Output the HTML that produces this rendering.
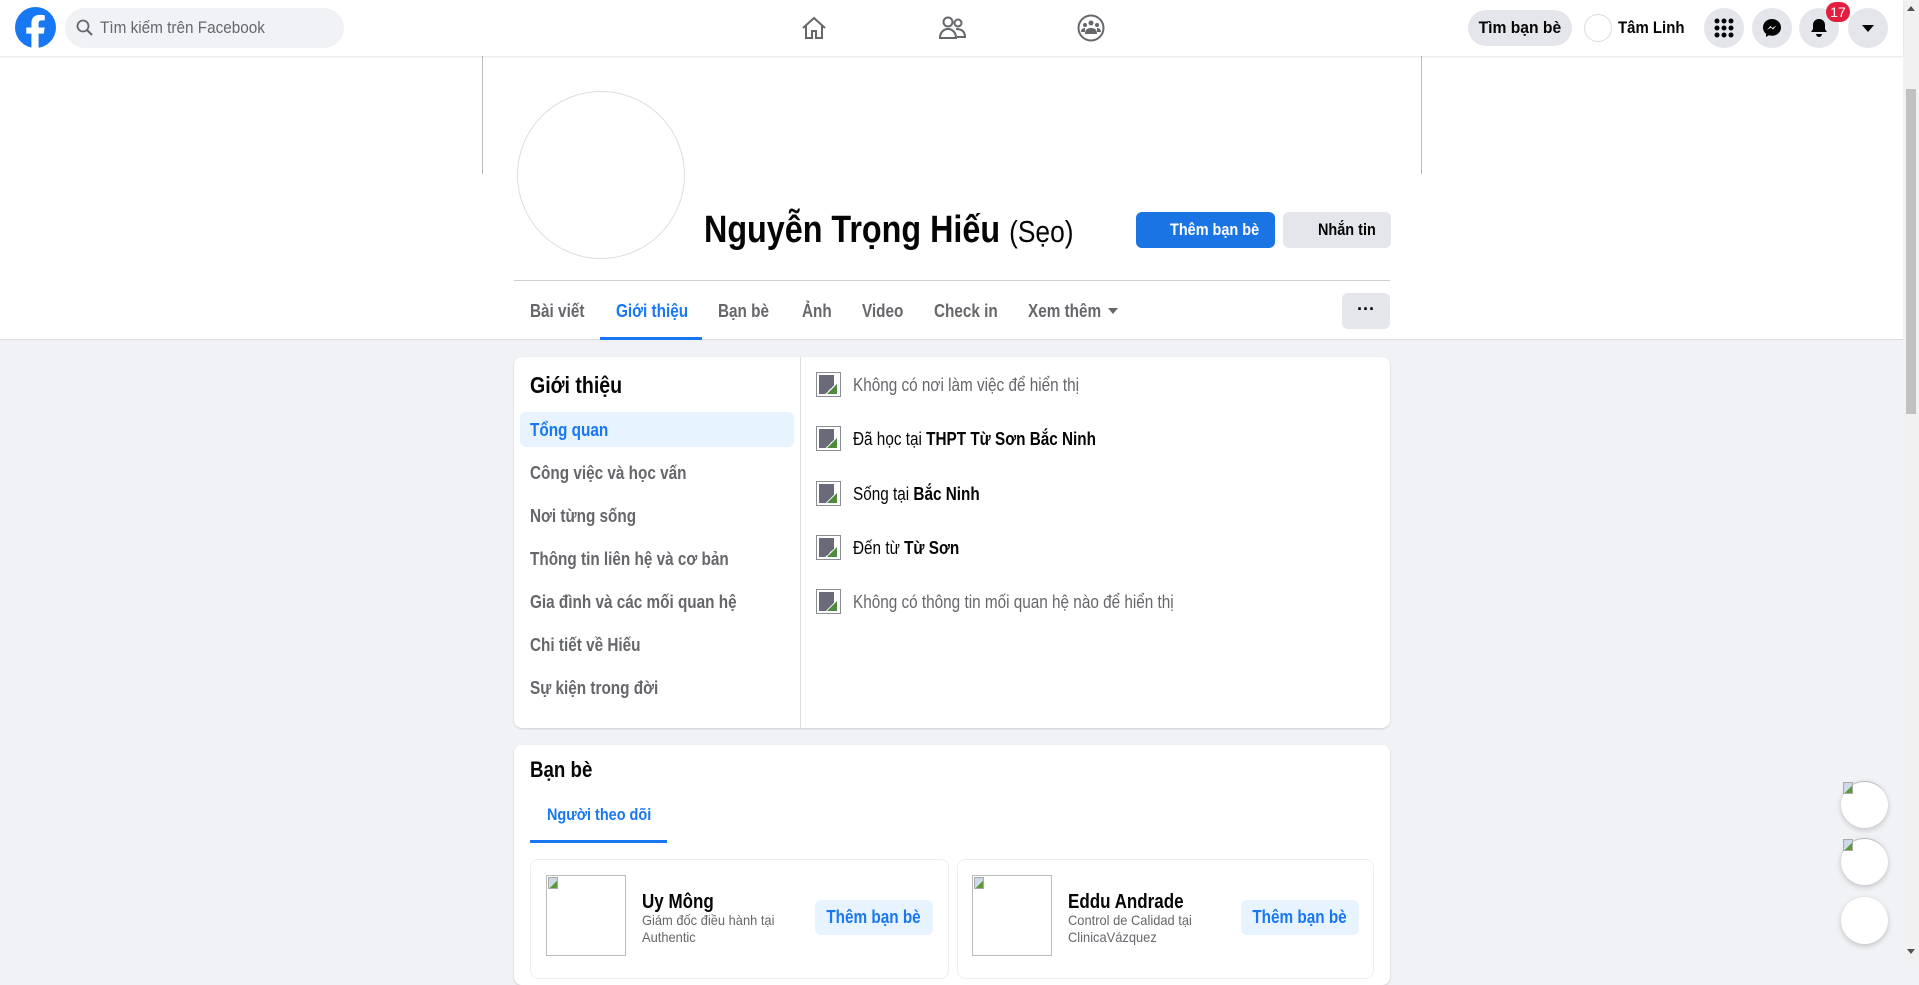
<!DOCTYPE html>
<html><head><meta charset="utf-8">
<style>
*{box-sizing:border-box;margin:0;padding:0}
body{width:1919px;height:961px;overflow:hidden;background:#f0f2f5;font-family:"Liberation Sans",sans-serif;position:relative;color:#050505}
.a{position:absolute;white-space:nowrap}
.t{display:inline-block;transform:scaleX(.85);transform-origin:0 50%}
.tc{display:inline-block;transform:scaleX(.85);transform-origin:50% 50%}
.top{left:0;top:0;width:1903px;height:56px;background:#fff;box-shadow:0 1px 2px rgba(0,0,0,.1);z-index:5}
.hdr{left:0;top:56px;width:1903px;height:284px;background:#fff;border-bottom:1px solid #ddd}
.circ{width:40px;height:40px;border-radius:50%;background:#e4e6eb;top:8px}
.tab{top:301px;font-size:18px;font-weight:bold;color:#65676b}
.card{background:#fff;border-radius:8px;box-shadow:0 1px 2px rgba(0,0,0,.15)}
.mi{left:530px;font-size:18px;font-weight:bold;color:#65676b}
.ri{left:816px;width:25px;height:25px;border:1px solid #8a8d91;background:#fff;overflow:hidden}
.ri:before{content:"";position:absolute;left:2px;top:2px;width:15px;height:19px;background:linear-gradient(135deg,#6a6a7a 75%,transparent 75%)}
.ri:after{content:"";position:absolute;right:3px;bottom:2px;width:0;height:0;border-left:10px solid transparent;border-bottom:10px solid #4d8a3c}
.rt{left:853px;top:0;font-size:18px;color:#050505}
.btnl{background:#e7f3ff;color:#1877f2;font-weight:bold;font-size:18px;border-radius:6px;text-align:center;line-height:35px}
.bi{width:10px;height:12px;border:1px solid #aaa;background:linear-gradient(135deg,#cfd8e6 60%,#5a9a3c 60%)}
</style></head><body>
<div class="a top">
  <svg class="a" style="left:15px;top:7px" width="41" height="41" viewBox="0 0 40 40"><circle cx="20" cy="20" r="20" fill="#1877f2"/><path d="M23 40V26h5l1-6h-6v-4c0-2 1-3 3-3h3V8c-1 0-3-.3-5-.3-5 0-8 3-8 8V20h-5v6h5v14z" fill="#fff"/></svg>
  <div class="a" style="left:65px;top:8px;width:279px;height:40px;border-radius:20px;background:#f0f2f5"></div>
  <svg class="a" style="left:76px;top:19px" width="18" height="18" viewBox="0 0 18 18"><circle cx="7" cy="7" r="5.5" fill="none" stroke="#65676b" stroke-width="1.8"/><path d="M11 11l5 5" stroke="#65676b" stroke-width="2"/></svg>
  <div class="a" style="left:100px;top:18px;font-size:17px;color:#65676b"><span class="t" style="transform:scaleX(.9)">Tìm kiếm trên Facebook</span></div>
  <svg class="a" style="left:800px;top:14px" width="28" height="28" viewBox="0 0 28 28"><path d="M3 14L14 4l11 10M6 12v12h6v-7h4v7h6V12" fill="none" stroke="#65676b" stroke-width="2"/></svg>
  <svg class="a" style="left:938px;top:14px" width="30" height="28" viewBox="0 0 30 28"><circle cx="10" cy="8" r="4.5" fill="none" stroke="#65676b" stroke-width="2"/><circle cx="20" cy="9" r="3.5" fill="none" stroke="#65676b" stroke-width="2"/><path d="M2 24c0-6 4-9 8-9s8 3 8 9zM18 15c5 0 9 2 9 8h-8" fill="none" stroke="#65676b" stroke-width="2"/></svg>
  <svg class="a" style="left:1076px;top:13px" width="30" height="30" viewBox="0 0 30 30"><circle cx="15" cy="15" r="12.5" fill="none" stroke="#65676b" stroke-width="2"/><circle cx="15" cy="10" r="2.5" fill="#65676b"/><circle cx="9" cy="12" r="2" fill="#65676b"/><circle cx="21" cy="12" r="2" fill="#65676b"/><path d="M9 21c0-4 2-6 6-6s6 2 6 6zM5 19c0-3 2-4 4-4v4zM25 19c0-3-2-4-4-4v4z" fill="#65676b"/></svg>
  <div class="a" style="left:1468px;top:10px;width:104px;height:36px;border-radius:18px;background:#e4e6eb;font-size:17px;font-weight:bold;text-align:center;line-height:36px"><span class="tc" style="transform:scaleX(.92)">Tìm bạn bè</span></div>
  <div class="a" style="left:1584px;top:14px;width:28px;height:28px;border-radius:50%;border:1px solid #ddd;background:#fff"></div>
  <div class="a" style="left:1618px;top:18px;font-size:17px;font-weight:bold"><span class="t" style="transform:scaleX(.88)">Tâm Linh</span></div>
  <div class="a circ" style="left:1704px"></div>
  <svg class="a" style="left:1714px;top:18px" width="20" height="20" viewBox="0 0 20 20" fill="#050505"><circle cx="3" cy="3" r="2.5"/><circle cx="10" cy="3" r="2.5"/><circle cx="17" cy="3" r="2.5"/><circle cx="3" cy="10" r="2.5"/><circle cx="10" cy="10" r="2.5"/><circle cx="17" cy="10" r="2.5"/><circle cx="3" cy="17" r="2.5"/><circle cx="10" cy="17" r="2.5"/><circle cx="17" cy="17" r="2.5"/></svg>
  <div class="a circ" style="left:1752px"></div>
  <svg class="a" style="left:1762px;top:18px" width="20" height="20" viewBox="0 0 20 20"><path d="M10 1C5 1 1 4.5 1 9.5c0 2.5 1 4.7 3 6.3V19l3-1.7c1 .3 2 .4 3 .4 5 0 9-3.6 9-8.2S15 1 10 1z" fill="#050505"/><path d="M5 12l3.5-4 2 2 4-2.5-3.5 4-2-2z" fill="#fff"/></svg>
  <div class="a circ" style="left:1799px"></div>
  <svg class="a" style="left:1809px;top:17px" width="20" height="22" viewBox="0 0 20 22"><path d="M10 2c-4 0-6 3-6 6v4l-2 3h16l-2-3V8c0-3-2-6-6-6zM7 17a3 3 0 006 0z" fill="#050505"/></svg>
  <div class="a" style="left:1826px;top:2px;min-width:24px;height:20px;border-radius:10px;background:#e41e3f;color:#fff;font-size:14px;text-align:center;line-height:20px;padding:0 3px">17</div>
  <div class="a circ" style="left:1848px"></div>
  <div class="a" style="left:1862px;top:25px;border-left:6px solid transparent;border-right:6px solid transparent;border-top:7px solid #050505"></div>
</div>
<div class="a" style="left:1903px;top:0;width:16px;height:961px;background:#f1f1f1"></div>
<div class="a" style="left:1906px;top:89px;width:10px;height:325px;background:#c1c1c1"></div>
<div class="a" style="left:1907px;top:6px;border-left:4px solid transparent;border-right:4px solid transparent;border-bottom:5px solid #505050"></div>
<div class="a" style="left:1907px;top:949px;border-left:4px solid transparent;border-right:4px solid transparent;border-top:5px solid #505050"></div>

<div class="a hdr"></div>
<div class="a" style="left:482px;top:56px;width:1px;height:118px;background:#bbb"></div>
<div class="a" style="left:1421px;top:56px;width:1px;height:118px;background:#bbb"></div>
<div class="a" style="left:517px;top:91px;width:168px;height:168px;border-radius:50%;border:1px solid #ddd;background:#fff"></div>
<div class="a" style="left:704px;top:209px;font-size:38px;font-weight:bold"><span class="t">Nguyễn Trọng Hiếu <span style="font-weight:normal;font-size:31px">(Sẹo)</span></span></div>
<div class="a" style="left:1136px;top:212px;width:139px;height:36px;border-radius:6px;background:#1b74e4;color:#fff;font-size:17px;font-weight:bold;line-height:36px;padding-left:34px"><span class="t">Thêm bạn bè</span></div>
<div class="a" style="left:1283px;top:212px;width:108px;height:36px;border-radius:6px;background:#e4e6eb;font-size:17px;font-weight:bold;line-height:36px;padding-left:35px"><span class="t">Nhắn tin</span></div>
<div class="a" style="left:514px;top:280px;width:876px;height:1px;background:#ced0d4"></div>
<div class="a tab" style="left:530px"><span class="t">Bài viết</span></div>
<div class="a tab" style="left:616px;color:#1877f2"><span class="t">Giới thiệu</span></div>
<div class="a" style="left:600px;top:337px;width:102px;height:3px;background:#1877f2"></div>
<div class="a tab" style="left:718px"><span class="t">Bạn bè</span></div>
<div class="a tab" style="left:802px"><span class="t">Ảnh</span></div>
<div class="a tab" style="left:862px"><span class="t">Video</span></div>
<div class="a tab" style="left:934px"><span class="t">Check in</span></div>
<div class="a tab" style="left:1028px"><span class="t">Xem thêm</span></div>
<div class="a" style="left:1108px;top:308px;border-left:5px solid transparent;border-right:5px solid transparent;border-top:6px solid #65676b"></div>
<div class="a" style="left:1342px;top:293px;width:48px;height:36px;border-radius:6px;background:#e4e6eb;font-size:18px;font-weight:bold;text-align:center;line-height:32px">···</div>

<div class="a card" style="left:514px;top:357px;width:876px;height:371px"></div>
<div class="a" style="left:800px;top:357px;width:1px;height:371px;background:#ddd"></div>
<div class="a" style="left:530px;top:372px;font-size:23px;font-weight:bold"><span class="t">Giới thiệu</span></div>
<div class="a" style="left:520px;top:412px;width:274px;height:35px;border-radius:6px;background:#e7f3ff"></div>
<div class="a mi" style="left:530px;top:420px;color:#1877f2"><span class="t">Tổng quan</span></div>
<div class="a mi" style="top:463px"><span class="t">Công việc và học vấn</span></div>
<div class="a mi" style="top:506px"><span class="t">Nơi từng sống</span></div>
<div class="a mi" style="top:549px"><span class="t">Thông tin liên hệ và cơ bản</span></div>
<div class="a mi" style="top:592px"><span class="t">Gia đình và các mối quan hệ</span></div>
<div class="a mi" style="top:635px"><span class="t">Chi tiết về Hiếu</span></div>
<div class="a mi" style="top:678px"><span class="t">Sự kiện trong đời</span></div>
<div class="a ri" style="top:372px"></div><div class="a rt" style="top:375px;color:#65676b"><span class="t">Không có nơi làm việc để hiển thị</span></div>
<div class="a ri" style="top:426px"></div><div class="a rt" style="top:429px"><span class="t">Đã học tại <b>THPT Từ Sơn Bắc Ninh</b></span></div>
<div class="a ri" style="top:481px"></div><div class="a rt" style="top:484px"><span class="t">Sống tại <b>Bắc Ninh</b></span></div>
<div class="a ri" style="top:535px"></div><div class="a rt" style="top:538px"><span class="t">Đến từ <b>Từ Sơn</b></span></div>
<div class="a ri" style="top:589px"></div><div class="a rt" style="top:592px;color:#65676b"><span class="t">Không có thông tin mối quan hệ nào để hiển thị</span></div>

<div class="a card" style="left:514px;top:745px;width:876px;height:240px"></div>
<div class="a" style="left:530px;top:757px;font-size:22px;font-weight:bold"><span class="t">Bạn bè</span></div>
<div class="a" style="left:547px;top:805px;font-size:17px;font-weight:bold;color:#1877f2"><span class="t">Người theo dõi</span></div>
<div class="a" style="left:530px;top:840px;width:137px;height:3px;background:#1877f2"></div>
<div class="a" style="left:530px;top:859px;width:419px;height:120px;border:1px solid #eee;border-radius:8px"></div>
<div class="a" style="left:957px;top:859px;width:417px;height:120px;border:1px solid #eee;border-radius:8px"></div>
<div class="a" style="left:546px;top:875px;width:80px;height:81px;border:1px solid #bbb"></div>
<div class="a bi" style="left:548px;top:877px"></div>
<div class="a" style="left:972px;top:875px;width:80px;height:81px;border:1px solid #bbb"></div>
<div class="a bi" style="left:974px;top:877px"></div>
<div class="a" style="left:642px;top:891px;font-size:20px;font-weight:bold"><span class="t">Uy Mông</span></div>
<div class="a" style="left:642px;top:912px;font-size:14px;color:#65676b;line-height:17px"><span class="t" style="transform:scaleX(.92)">Giám đốc điều hành tại<br>Authentic</span></div>
<div class="a btnl" style="left:815px;top:900px;width:118px"><span class="tc">Thêm bạn bè</span></div>
<div class="a" style="left:1068px;top:891px;font-size:20px;font-weight:bold"><span class="t">Eddu Andrade</span></div>
<div class="a" style="left:1068px;top:912px;font-size:14px;color:#65676b;line-height:17px"><span class="t" style="transform:scaleX(.92)">Control de Calidad tại<br>ClinicaVázquez</span></div>
<div class="a btnl" style="left:1241px;top:900px;width:118px"><span class="tc">Thêm bạn bè</span></div>

<div class="a" style="left:1841px;top:781px;width:47px;height:47px;border-radius:50%;background:#fff;box-shadow:0 2px 6px rgba(0,0,0,.2);border-top:1px solid #bbb"></div>
<div class="a bi" style="left:1843px;top:782px"></div>
<div class="a" style="left:1841px;top:838px;width:47px;height:47px;border-radius:50%;background:#fff;box-shadow:0 2px 6px rgba(0,0,0,.2);border-top:1px solid #bbb"></div>
<div class="a bi" style="left:1843px;top:839px"></div>
<div class="a" style="left:1841px;top:897px;width:47px;height:47px;border-radius:50%;background:#fff;box-shadow:0 2px 6px rgba(0,0,0,.2)"></div>
</body></html>
